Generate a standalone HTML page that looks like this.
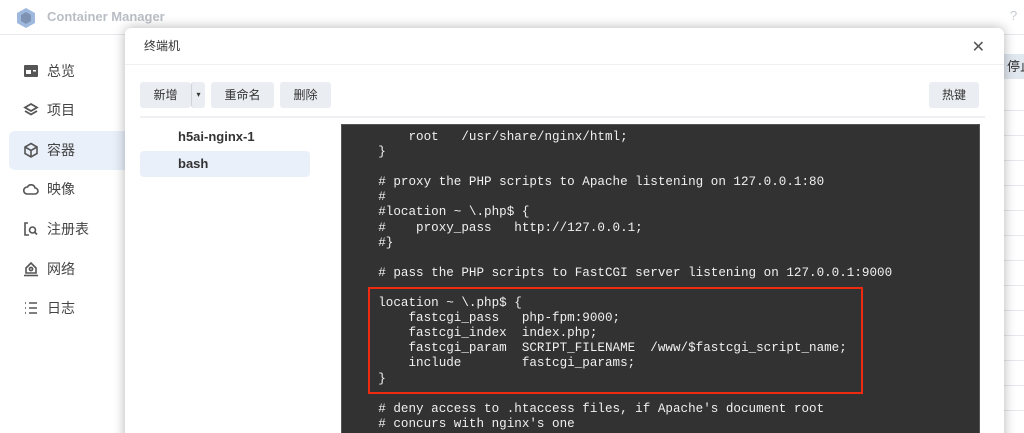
<!DOCTYPE html>
<html><head><meta charset="utf-8"><style>
*{margin:0;padding:0;box-sizing:border-box}
html,body{width:1024px;height:433px;overflow:hidden}
body{background:#fff;font-family:"Liberation Sans","Noto Sans CJK SC",sans-serif;position:relative;color:#333}
.top{position:absolute;left:0;top:0;width:1024px;height:35px;border-bottom:1px solid #e6e9ee}
.logo{position:absolute;left:17px;top:8px;width:18px;height:20px}
.title{position:absolute;left:47px;top:9px;font-size:13px;font-weight:bold;color:#b9bec5}
.q{position:absolute;left:1010px;top:8px;color:#c7cbd0;font-size:13px}
.nav{position:absolute;left:9px;width:130px;height:39px;font-size:14px;color:#444;line-height:39px;padding-left:38px}
.nav.sel{background:#e9f0fa;border-radius:6px}
.nav svg{position:absolute;left:14px;top:11px}
.rt{position:absolute;left:1003px;width:21px;border-top:1px solid #e6e9ee}
.dlg{position:absolute;left:125px;top:28px;width:879px;height:420px;background:#fff;border-radius:6px;box-shadow:0 0 12px rgba(0,0,0,.3)}
.dh{height:37px;border-bottom:1px solid #eef0f4;font-size:12px;line-height:37px;padding-left:19px;color:#333}
.x{position:absolute;right:19px;top:9px;font-size:16px;color:#555}
.btn{position:absolute;top:54px;height:26px;background:#eaedf1;border-radius:3px;font-size:12px;line-height:26px;text-align:center;color:#333}
.sep{position:absolute;left:15px;top:88px;width:845px;height:2px;background:#eef0f4}
.item{position:absolute;left:15px;width:170px;height:26px;font-size:13px;font-weight:bold;line-height:26px;padding-left:38px;color:#333}
.term{position:absolute;left:216px;top:96px;width:639px;height:330px;background:#323232;border:1px solid #555;overflow:hidden}
pre{position:absolute;left:6px;top:5px;font-family:"Liberation Mono",monospace;font-size:12.6px;line-height:15.1px;color:#f0f0f0}
.red{position:absolute;left:26px;top:162px;width:495px;height:107px;border:2.5px solid #f02a10}
</style></head><body>
<div class="top">
<svg class="logo" viewBox="0 0 18 20"><polygon points="9,0 18,5 18,15 9,20 0,15 0,5" fill="#9fb8dd"/><polygon points="9,4 14,7 14,13 9,16 4,13 4,7" fill="#7e93b3"/></svg>
<div class="title">Container Manager</div>
<div class="q">?</div>
</div>
<div class="nav" style="top:52px"><svg width="16" height="16" viewBox="0 0 16 16"><rect x="1" y="2" width="14" height="12" rx="1" fill="#555"/><rect x="3" y="7" width="5" height="4" fill="#fff"/><rect x="10" y="7" width="3" height="1.5" fill="#fff"/></svg>总览</div>
<div class="nav" style="top:91px"><svg width="16" height="16" viewBox="0 0 16 16" fill="none" stroke="#555" stroke-width="1.8"><path d="M8 2L14 5.5 8 9 2 5.5Z"/><path d="M2 9L8 12.5 14 9"/></svg>项目</div>
<div class="nav sel" style="top:131px"><svg width="16" height="16" viewBox="0 0 16 16" fill="none" stroke="#555" stroke-width="1.6"><path d="M8 1.5L14 5v6.5L8 15 2 11.5V5Z"/><path d="M2 5L8 8.5 14 5M8 8.5V15"/></svg>容器</div>
<div class="nav" style="top:170px"><svg width="16" height="16" viewBox="0 0 16 16" fill="none" stroke="#555" stroke-width="1.6"><path d="M4 13h8a3 3 0 0 0 0-6 4 4 0 0 0-7.5-1A3.5 3.5 0 0 0 4 13Z"/></svg>映像</div>
<div class="nav" style="top:210px"><svg width="16" height="16" viewBox="0 0 16 16" fill="none" stroke="#555" stroke-width="1.6"><path d="M5 2H2v12h4"/><circle cx="9.5" cy="9" r="3"/><path d="M11.5 11l2.5 2.5"/></svg>注册表</div>
<div class="nav" style="top:250px"><svg width="16" height="16" viewBox="0 0 16 16" fill="none" stroke="#555" stroke-width="1.6"><path d="M3 7L8 2l5 5v5H3Z"/><circle cx="8" cy="8" r="1.6"/><path d="M1 14.5h14"/></svg>网络</div>
<div class="nav" style="top:289px"><svg width="16" height="16" viewBox="0 0 16 16" fill="none" stroke="#555" stroke-width="1.6"><path d="M2 3h1M2 8h1M2 13h1M6 3h8M6 8h8M6 13h8"/></svg>日志</div>
<div style="position:absolute;left:1003px;top:54px;width:21px;height:25px;background:#e2e8f0;font-size:13px;line-height:25px;padding-left:4px;white-space:nowrap;overflow:hidden">停止</div>
<div class="rt" style="top:110px"></div><div class="rt" style="top:135px"></div><div class="rt" style="top:160px"></div><div class="rt" style="top:185px"></div><div class="rt" style="top:210px"></div><div class="rt" style="top:235px"></div><div class="rt" style="top:260px"></div><div class="rt" style="top:285px"></div><div class="rt" style="top:310px"></div><div class="rt" style="top:335px"></div><div class="rt" style="top:360px"></div><div class="rt" style="top:385px"></div><div class="rt" style="top:410px"></div>
<div class="dlg">
<div class="dh">终端机</div>
<div class="x">✕</div>
<div class="btn" style="left:15px;width:51px">新增</div>
<div class="btn" style="left:66px;width:14px;border-left:1px solid #d0d4da;font-size:8px">▾</div>
<div class="btn" style="left:86px;width:63px">重命名</div>
<div class="btn" style="left:155px;width:51px">删除</div>
<div class="btn" style="left:804px;width:50px">热键</div>
<div class="sep"></div>
<div class="item" style="top:96px">h5ai-nginx-1</div>
<div class="item" style="top:123px;background:#e9f0fa;border-radius:4px">bash</div>
<div class="term">
<pre>        root   /usr/share/nginx/html;
    }

    # proxy the PHP scripts to Apache listening on 127.0.0.1:80
    #
    #location ~ \.php$ {
    #    proxy_pass   http://127.0.0.1;
    #}

    # pass the PHP scripts to FastCGI server listening on 127.0.0.1:9000

    location ~ \.php$ {
        fastcgi_pass   php-fpm:9000;
        fastcgi_index  index.php;
        fastcgi_param  SCRIPT_FILENAME  /www/$fastcgi_script_name;
        include        fastcgi_params;
    }

    # deny access to .htaccess files, if Apache's document root
    # concurs with nginx's one</pre>
<div class="red"></div>
</div>
</div>
</body></html>
